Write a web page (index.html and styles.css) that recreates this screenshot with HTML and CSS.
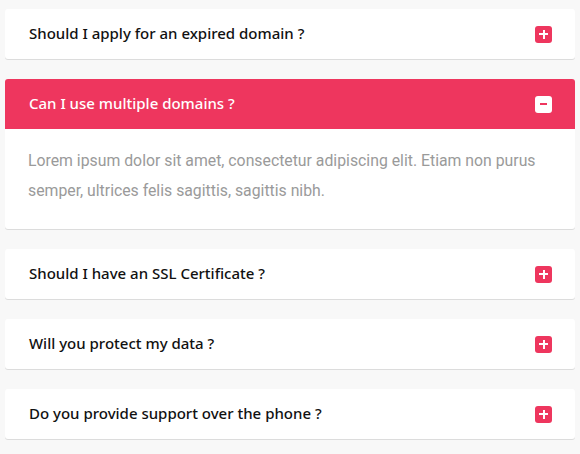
FILE: index.html
```html
<!DOCTYPE html>
<html>
<head>
<meta charset="utf-8">
<link rel="stylesheet" href="styles.css">
</head>
<body>
<div class="faq">
  <div class="item">
    <div class="head"><span class="title">Should I apply for an expired domain ?</span><span class="icon plus"></span></div>
  </div>
  <div class="item open">
    <div class="head"><span class="title">Can I use multiple domains ?</span><span class="icon minus"></span></div>
    <div class="body">Lorem ipsum dolor sit amet, consectetur adipiscing elit. Etiam non purus semper, ultrices felis sagittis, sagittis nibh.</div>
  </div>
  <div class="item">
    <div class="head"><span class="title">Should I have an SSL Certificate ?</span><span class="icon plus"></span></div>
  </div>
  <div class="item">
    <div class="head"><span class="title">Will you protect my data ?</span><span class="icon plus"></span></div>
  </div>
  <div class="item">
    <div class="head"><span class="title">Do you provide support over the phone ?</span><span class="icon plus"></span></div>
  </div>
</div>
</body>
</html>
```
FILE: styles.css
```css
html, body { margin: 0; padding: 0; background: #f8f8f8; }
.faq { padding: 9px 5px; display: flex; flex-direction: column; gap: 20px; }
.item { background: #fff; border-radius: 3px; box-shadow: 0 1px 0 #dcdcdc; }
.head { box-sizing: border-box; height: 50px; display: flex; align-items: center; justify-content: space-between; padding: 0 23px 0 24px; }
.title { font-family: "Noto Sans", sans-serif; font-size: 15px; font-weight: 500; color: #111; line-height: 20px; margin-bottom: 3px; }
.open .head { background: #ee365e; border-radius: 3px 3px 0 0; }
.open .title { color: #fff; }
.icon { width: 17px; height: 17px; border-radius: 3px; background: #ee365e; position: relative; }
.icon::before, .icon::after { content: ""; position: absolute; background: #fff; }
.icon::before { left: 4px; top: 7.5px; width: 9px; height: 2px; }
.plus::after { left: 7.5px; top: 4px; width: 2px; height: 9px; }
.minus { background: #fff; }
.minus::before { background: #ee365e; left: 5px; width: 7px; }
.body { padding: 17px 23px 23px 23px; font-family: Roboto, sans-serif; font-size: 15.8px; line-height: 30px; color: #9a9a9a; }
```
